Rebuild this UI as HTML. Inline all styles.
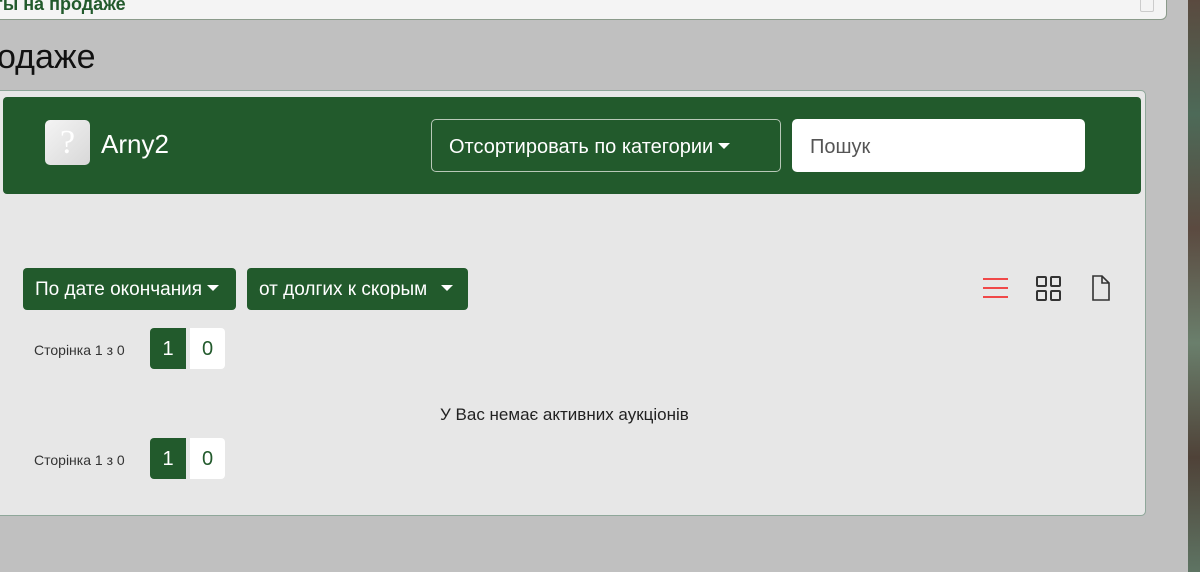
<!DOCTYPE html>
<html><head><meta charset="utf-8"><style>
*{box-sizing:border-box;margin:0;padding:0}
body{width:1200px;height:572px;overflow:hidden;background:#c0c0c0;font-family:"Liberation Sans",sans-serif;position:relative}
.a{position:absolute}
.tb{left:-10px;top:-10px;width:1177px;height:30px;background:#f4f4f4;border:1px solid #8a9a8a;border-radius:0 0 6px 6px}
.strip{left:1188px;top:0;width:12px;height:572px;background:linear-gradient(180deg,#5a4a3f,#4d6a58 20%,#5b4a40 40%,#6a7f6c 60%,#4f4238 80%,#5e7463)}
.panel{left:-6px;top:90px;width:1152px;height:426px;background:#e7e7e7;border:1px solid #8fa79a;border-radius:5px}
.hdr{left:3px;top:97px;width:1138px;height:97px;background:#225a2c;border-radius:4px}
.btn{background:#225a2c;color:#fff;border-radius:4px;font-size:19px;line-height:44px;height:42px;padding-left:12px}
.car{display:inline-block;width:0;height:0;border-left:6px solid transparent;border-right:6px solid transparent;border-top:6px solid #fff;vertical-align:middle;margin-left:5px;margin-top:-3px}
.pg{font-size:14px;color:#333}
.p1{width:36px;height:41px;background:#225a2c;color:#fff;font-size:20px;text-align:center;line-height:43px;border-radius:4px 0 0 4px}
.p2{width:35px;height:41px;background:#fff;color:#225a2c;font-size:20px;text-align:center;line-height:43px;border-radius:0 4px 4px 0}
</style></head><body>
<div class="a strip"></div>
<div class="a tb"></div>
<div class="a" style="left:-6px;top:-6px;font-size:18px;font-weight:bold;color:#225a2c">ты на продаже</div>
<div class="a" style="left:1140px;top:-4px;width:14px;height:16px;border:1px solid #ccc;border-radius:2px"></div>
<div class="a" style="left:-3px;top:38px;font-size:34px;color:#111">одаже</div>
<div class="a panel"></div>
<div class="a hdr"></div>
<div class="a" style="left:45px;top:120px;width:45px;height:45px;background:linear-gradient(135deg,#f4f4f4,#d8d8d8);border-radius:5px;color:#fff;font-size:34px;text-align:center;line-height:45px;font-family:'Liberation Serif',serif">?</div>
<div class="a" style="left:101px;top:129px;font-size:26px;color:#fff">Arny2</div>
<div class="a" style="left:431px;top:119px;width:350px;height:53px;border:1px solid #b8c8b8;border-radius:5px;color:#fff;font-size:20px;line-height:54px;padding-left:17px">Отсортировать по категории<span class="car"></span></div>
<div class="a" style="left:792px;top:119px;width:293px;height:53px;background:#fff;border-radius:5px;color:#555;font-size:20px;line-height:56px;padding-left:18px">Пошук</div>
<div class="a btn" style="left:23px;top:268px;width:213px">По дате окончания<span class="car"></span></div>
<div class="a btn" style="left:247px;top:268px;width:221px">от долгих к скорым <span class="car" style="margin-left:8px"></span></div>
<svg class="a" style="left:980px;top:274px" width="140" height="30">
<g stroke="#f04848" stroke-width="2"><line x1="3" y1="5" x2="28" y2="5"/><line x1="3" y1="14" x2="28" y2="14"/><line x1="3" y1="23" x2="28" y2="23"/></g>
<g stroke="#333" stroke-width="2" fill="none"><rect x="57" y="3" width="9" height="9" rx="1"/><rect x="71" y="3" width="9" height="9" rx="1"/><rect x="57" y="17" width="9" height="9" rx="1"/><rect x="71" y="17" width="9" height="9" rx="1"/>
<path d="M113 2h9l7 7v17h-16z M122 2v7h7" stroke-width="1.6"/></g></svg>
<div class="a pg" style="left:34px;top:342px">Сторінка 1 з 0</div>
<div class="a p1" style="left:150px;top:328px">1</div><div class="a p2" style="left:190px;top:328px">0</div>
<div class="a" style="left:440px;top:405px;font-size:17px;color:#222">У Вас немає активних аукціонів</div>
<div class="a pg" style="left:34px;top:452px">Сторінка 1 з 0</div>
<div class="a p1" style="left:150px;top:438px">1</div><div class="a p2" style="left:190px;top:438px">0</div>
</body></html>
